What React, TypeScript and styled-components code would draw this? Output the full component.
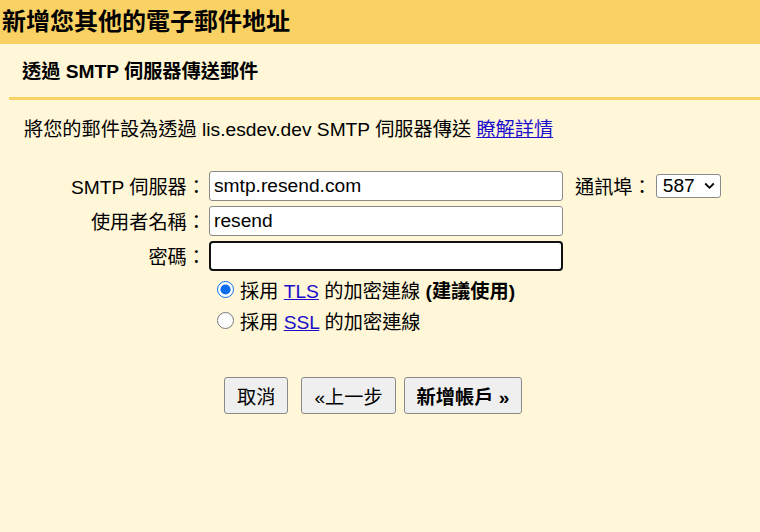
import styled, { createGlobalStyle } from "styled-components";

const GlobalStyle = createGlobalStyle`
  body {
    margin: 0;
    background: #fff7d7;
    font-family: "Liberation Sans", Arial, "Noto Sans CJK TC", sans-serif;
    font-size: 19.2px;
    color: #000;
  }
`;

const Page = styled.div`
  width: 760px;
  min-height: 532px;
  background: #fff7d7;
`;

const TitleBar = styled.h1`
  margin: 0;
  height: 44px;
  line-height: 44px;
  padding-left: 2px;
  background: #fad163;
  font-size: 24px;
  font-weight: bold;
`;

const Body = styled.div`
  padding-left: 9px;
`;

const SubTitle = styled.h2`
  margin: 0;
  padding: 17px 0 14px 13px;
  line-height: 22px;
  font-size: 19.2px;
  font-weight: bold;
  border-bottom: 3px solid #fad163;
`;

const Description = styled.p`
  margin: 19px 0 0 15px;
  line-height: 22px;
`;

const Link = styled.a`
  color: #1a0dcc;
  text-decoration: underline;
`;

const Form = styled.div`
  margin-top: 30px;
  margin-left: -9px;
`;

const Row = styled.div`
  display: flex;
  align-items: center;
  height: 30px;
  margin-bottom: 5px;
`;

const Label = styled.label`
  width: 206px;
  padding-right: 3px;
  text-align: right;
  white-space: nowrap;
`;

const TextInput = styled.input<{ $focused?: boolean }>`
  box-sizing: border-box;
  width: 354px;
  height: 30px;
  padding: 0 4px;
  font: inherit;
  color: #000;
  background: #fff;
  border: ${(p) => (p.$focused ? "2px solid #101010" : "1px solid #8a8a8a")};
  border-radius: ${(p) => (p.$focused ? "4px" : "3px")};
  outline: none;
`;

const PortLabel = styled.span`
  margin-left: 12px;
  margin-right: 4px;
`;

const SelectWrap = styled.span`
  position: relative;
  display: inline-flex;
`;

const Select = styled.select`
  appearance: none;
  box-sizing: border-box;
  width: 65px;
  height: 24px;
  padding: 0 0 0 6px;
  font: inherit;
  line-height: 22px;
  color: #000;
  background: #fff;
  border: 1px solid #8a8a8a;
  border-radius: 3px;
`;

const Chevron = styled.svg`
  position: absolute;
  right: 6px;
  top: 8px;
  pointer-events: none;
`;

const Options = styled.div`
  margin-left: 217px;
  margin-top: -2px;
`;

const RadioRow = styled.label`
  display: flex;
  align-items: center;
  height: 31px;
  gap: 6px;
`;

const Radio = styled.input`
  width: 17px;
  height: 17px;
  margin: 0;
  accent-color: #0b6cf0;
`;

const Strong = styled.b`
  font-weight: bold;
`;

const Buttons = styled.div`
  display: flex;
  margin: 41px 0 0 224px;
`;

const Button = styled.button<{ $bold?: boolean; $gap?: number }>`
  box-sizing: border-box;
  height: 37px;
  padding: 0 12px;
  margin-right: ${(p) => p.$gap ?? 0}px;
  font: inherit;
  font-weight: ${(p) => (p.$bold ? "bold" : "normal")};
  color: #000;
  background: #efefef;
  border: 1px solid #8a8a8a;
  border-radius: 3px;
`;

export default function App() {
  return (
    <Page>
      <GlobalStyle />
      <TitleBar>新增您其他的電子郵件地址</TitleBar>
      <Body>
        <SubTitle>透過 SMTP 伺服器傳送郵件</SubTitle>
        <Description>
          將您的郵件設為透過 lis.esdev.dev SMTP 伺服器傳送 <Link href="#">瞭解詳情</Link>
        </Description>
        <Form>
          <Row>
            <Label>SMTP 伺服器：</Label>
            <TextInput defaultValue="smtp.resend.com" />
            <PortLabel>通訊埠：</PortLabel>
            <SelectWrap>
              <Select defaultValue="587">
                <option>587</option>
                <option>465</option>
                <option>25</option>
              </Select>
              <Chevron width="11" height="8" viewBox="0 0 11 8">
                <path d="M1.2 1.5 L5.5 5.8 L9.8 1.5" fill="none" stroke="#000" strokeWidth="1.8" />
              </Chevron>
            </SelectWrap>
          </Row>
          <Row>
            <Label>使用者名稱：</Label>
            <TextInput defaultValue="resend" />
          </Row>
          <Row>
            <Label>密碼：</Label>
            <TextInput type="password" $focused />
          </Row>
          <Options>
            <RadioRow>
              <Radio type="radio" name="sec" defaultChecked />
              <span>
                採用 <Link href="#">TLS</Link> 的加密連線 <Strong>(建議使用)</Strong>
              </span>
            </RadioRow>
            <RadioRow>
              <Radio type="radio" name="sec" />
              <span>
                採用 <Link href="#">SSL</Link> 的加密連線
              </span>
            </RadioRow>
          </Options>
          <Buttons>
            <Button $gap={13}>取消</Button>
            <Button $gap={8}>«上一步</Button>
            <Button $bold>新增帳戶 »</Button>
          </Buttons>
        </Form>
      </Body>
    </Page>
  );
}
